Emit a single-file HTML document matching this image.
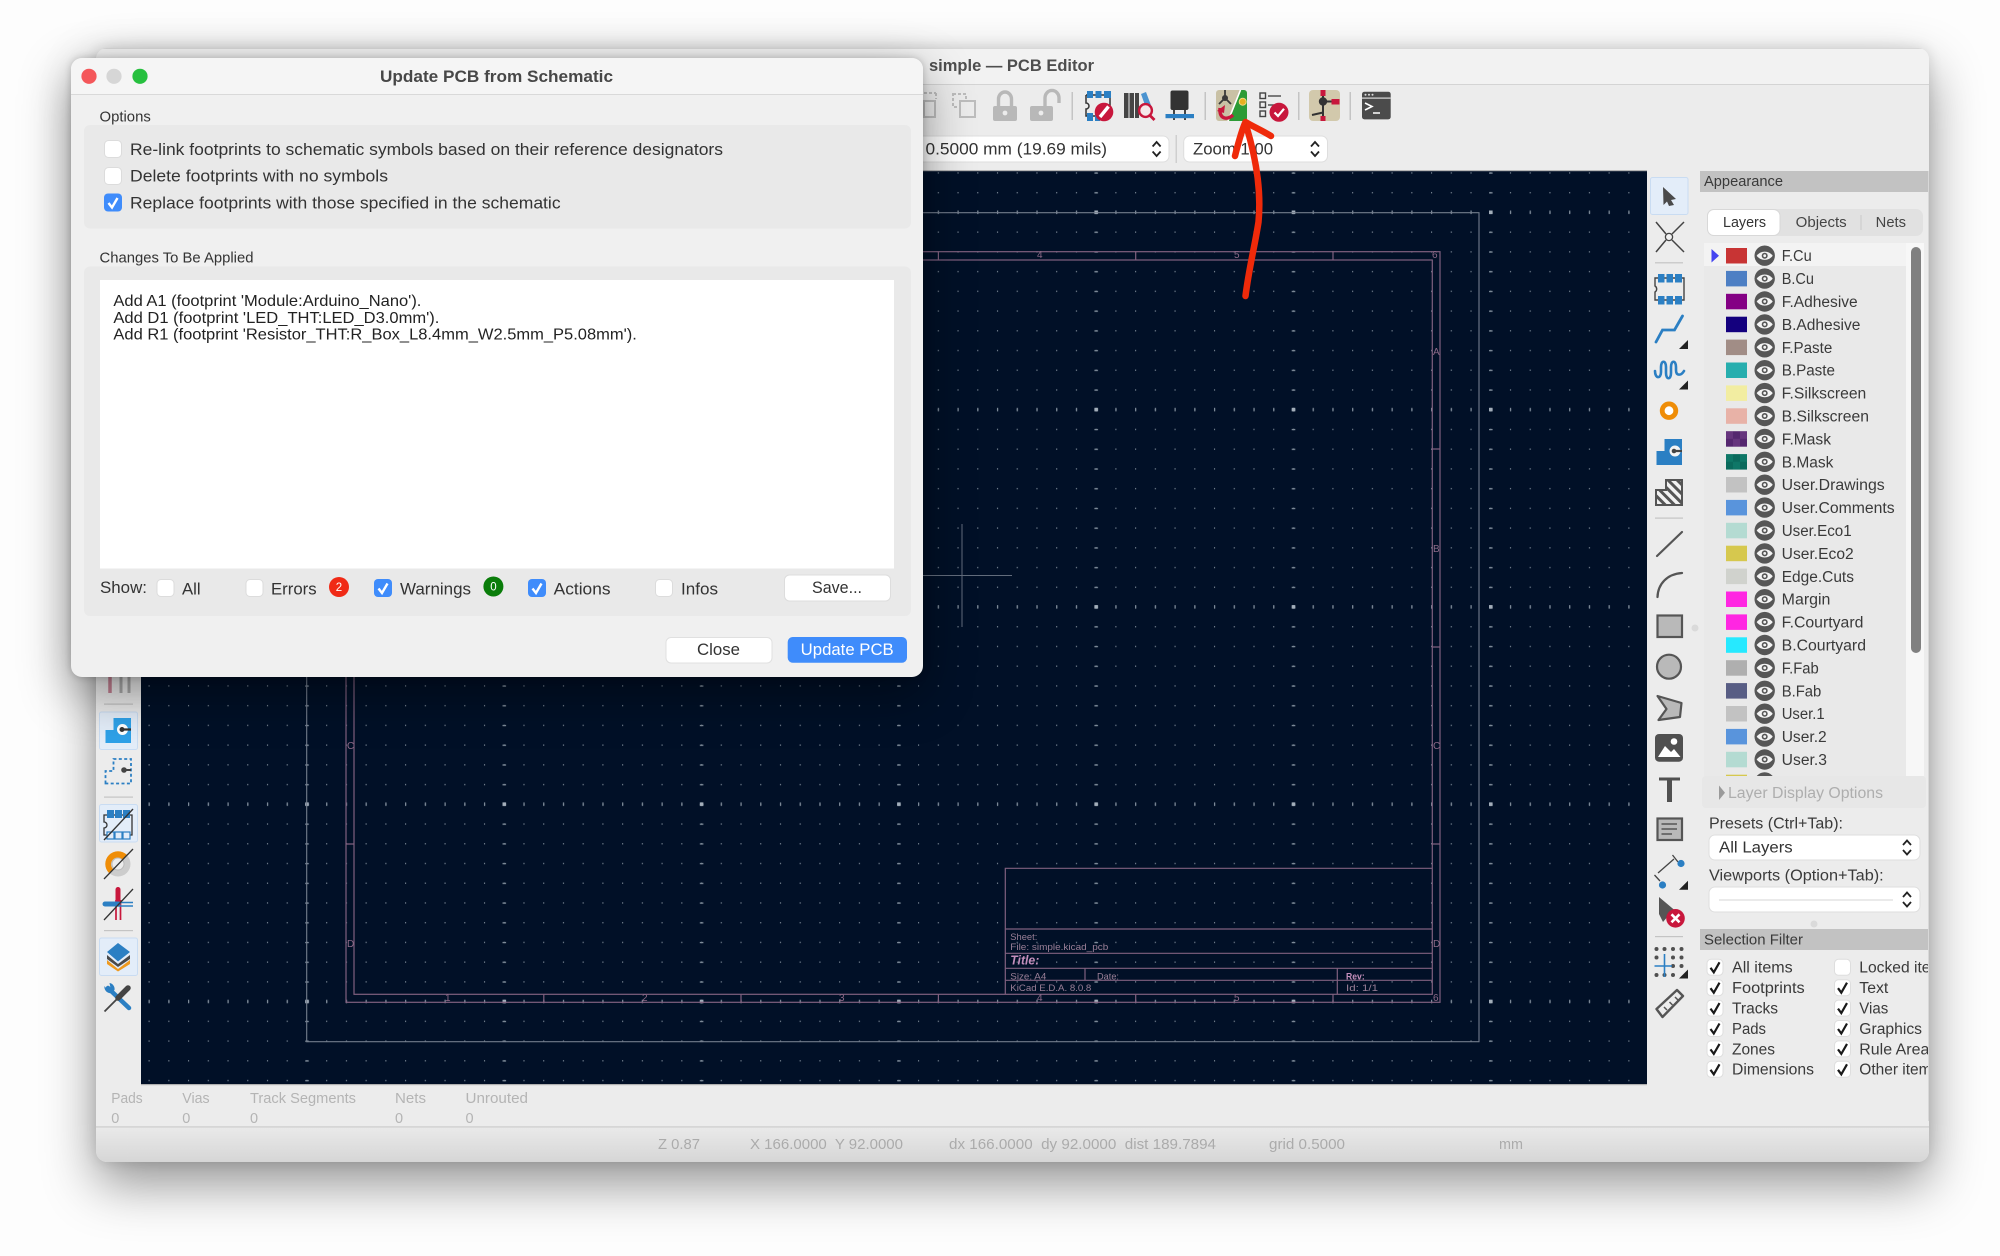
<!DOCTYPE html>
<html>
<head>
<meta charset="utf-8">
<title>simple — PCB Editor</title>
<style>
html,body{margin:0;padding:0;background:#fff;width:2000px;height:1256px;overflow:hidden}
body{position:relative;background:#fdfdfd}
.main{position:absolute;left:96px;top:48px;width:1833px;height:1114px;border-radius:11px;background:#ececec;box-shadow:0 22px 52px rgba(0,0,0,.42),0 0 14px rgba(0,0,0,.12)}
.dlg{position:absolute;left:71px;top:58px;width:852px;height:619px;border-radius:11px;background:#f0f0f0;box-shadow:0 16px 50px rgba(0,0,0,.42),0 0 8px rgba(0,0,0,.2)}
svg{position:absolute;left:0;top:0;filter:blur(.35px)}
text{font-family:"Liberation Sans",sans-serif;font-size:15.5px;fill:#3a3a3a}
</style>
</head>
<body>
<div class="main"></div>
<svg width="2000" height="1256" viewBox="0 0 2000 1256" xmlns="http://www.w3.org/2000/svg">
<defs>
<clipPath id="win"><rect x="96" y="48" width="1833" height="1114" rx="11"/></clipPath>
<clipPath id="canv"><rect x="141" y="171" width="1506" height="913"/></clipPath>
<clipPath id="list"><rect x="1704" y="243" width="220" height="533"/></clipPath>
<pattern id="g1" patternUnits="userSpaceOnUse" x="306.4" y="211.7" width="19.73" height="19.73"><rect width="1.1" height="1.4" fill="#74818f"/></pattern>
<pattern id="g2" patternUnits="userSpaceOnUse" x="305.2" y="211.5" width="197.3" height="19.73"><rect width="3.6" height="1.3" y=".4" fill="#7f8c9a"/></pattern>
<pattern id="g3" patternUnits="userSpaceOnUse" x="306.4" y="210.5" width="19.73" height="197.3"><rect width="1.2" height="3.6" fill="#7f8c9a"/></pattern>
<pattern id="g4" patternUnits="userSpaceOnUse" x="305.2" y="210.5" width="197.3" height="197.3"><rect width="3.6" height="3.6" fill="#a3aeba"/></pattern>
<pattern id="st" patternUnits="userSpaceOnUse" width="6.5" height="6.5" patternTransform="rotate(-45)"><rect width="6.5" height="6.5" fill="#f2f2f2"/><rect width="3" height="6.5" fill="#555"/></pattern>
<pattern id="ck1" patternUnits="userSpaceOnUse" x="1726" y="431.2" width="14" height="15.5"><rect width="14" height="15.5" fill="#55276f"/><rect width="7" height="7.7" fill="#66357d"/><rect x="7" y="7.7" width="7" height="7.7" fill="#66357d"/></pattern>
<pattern id="ck2" patternUnits="userSpaceOnUse" x="1726" y="454.1" width="14" height="15.5"><rect width="14" height="15.5" fill="#0a6a5c"/><rect width="7" height="7.7" fill="#0e7767"/><rect x="7" y="7.7" width="7" height="7.7" fill="#0e7767"/></pattern>
<g id="eye"><circle r="10.2" fill="#565656"/><path d="M-8 0C-4-5.500 4-5.500 8 0C4 5.500-4 5.500-8 0Z" fill="#f4f4f4"/><circle r="3" fill="#565656"/><circle r="1.400" fill="#f4f4f4"/></g>
<g id="ud"><path d="M-4-2.500L0-7L4-2.500M-4 2.500L0 7L4 2.500" fill="none" stroke="#222" stroke-width="1.800"/></g>
<g id="tri"><path d="M9 0V9H0Z" fill="#222"/></g>
<g id="sc"><rect x="-8" y="-8" width="16" height="16" rx="4" fill="#fff" stroke="#dedede"/><path d="M-4.500 .5L-1.200 5L4.500-5" fill="none" stroke="#1a1a1a" stroke-width="2.200"/></g>
</defs>
<g clip-path="url(#win)">
<rect x="96" y="48" width="1833" height="36" fill="#f2f2f2"/>
<rect x="96" y="84" width="1833" height="1" fill="#d4d4d4"/>
<rect x="96" y="85" width="1833" height="86" fill="#ececec"/>
<rect x="96" y="48" width="1833" height="1" fill="#d8d8d8"/>
<text x="929" y="71" textLength="165" lengthAdjust="spacingAndGlyphs" style="font-weight:700;font-size:16.500px;fill:#4e4e4e">simple — PCB Editor</text>

<!-- toolbar icons -->
<g fill="none" stroke="#bdbdbd" stroke-width="2">
<rect x="924" y="101" width="11" height="16"/><path d="M924 93h12M936 93v6" stroke-dasharray="3 2"/>
<rect x="953" y="94" width="13" height="13" stroke-dasharray="3 2"/><rect x="960" y="101" width="15" height="16" fill="#ececec"/>
</g>
<g fill="#b8b8b8">
<rect x="993" y="106" width="24" height="15" rx="2"/>
<path d="M998.500 106V99a6.500 7 0 0 1 13 0V106" fill="none" stroke="#b8b8b8" stroke-width="3.400"/>
<circle cx="1005" cy="113" r="2.400" fill="#ececec"/>
<rect x="1030" y="106" width="23" height="15" rx="2"/>
<path d="M1045 106V98a6.500 7 0 0 1 14 0V103" fill="none" stroke="#b8b8b8" stroke-width="3.400"/>
<circle cx="1041" cy="113" r="2.400" fill="#ececec"/>
</g>
<g fill="#c4c4c4"><rect x="1071.500" y="92" width="1.500" height="28"/><rect x="1204.500" y="92" width="1.500" height="28"/><rect x="1298" y="92" width="1.500" height="28"/><rect x="1349.500" y="92" width="1.500" height="28"/></g>
<!-- board edit -->
<path d="M1086 95H1110V106M1086 95V103a3 3 0 0 1 0 6V116H1098" fill="none" stroke="#333" stroke-width="1.500"/>
<g fill="#2b7fc3"><rect x="1087" y="91" width="6" height="7"/><rect x="1095.500" y="91" width="6" height="7"/><rect x="1104" y="91" width="7" height="7"/><rect x="1087" y="113" width="6" height="8"/><rect x="1095" y="113" width="5" height="8"/></g>
<circle cx="1104" cy="112" r="9.300" fill="#c8173c"/><path d="M1100 117L1108.500 106.500" stroke="#fff" stroke-width="3.400"/>
<!-- library -->
<g fill="#454545"><rect x="1124" y="93" width="4.500" height="25"/><rect x="1129.500" y="93" width="4.500" height="25"/><rect x="1135" y="93" width="4" height="25"/></g>
<path d="M1141 94L1146 92L1152 108L1146 108Z" fill="#4b93d0"/>
<circle cx="1145.500" cy="110.500" r="6.400" fill="#f4e9ea" stroke="#c8173c" stroke-width="2.400"/><path d="M1150 115.500L1154.500 120" stroke="#c8173c" stroke-width="2.800"/>
<!-- chip -->
<rect x="1170.500" y="90.500" width="18" height="19.500" rx="2" fill="#333"/><rect x="1173" y="110" width="2" height="10" fill="#444"/><rect x="1184" y="110" width="2" height="10" fill="#444"/><rect x="1165.500" y="114" width="28.500" height="4.200" fill="#2b7fc3"/>
<!-- update pcb icon -->
<rect x="1216" y="90" width="31" height="31" rx="3" fill="#c9c1a5"/>
<path d="M1241 90H1244a3 3 0 0 1 3 3V118a3 3 0 0 1-3 3H1229Z" fill="#2d9b36"/>
<path d="M1240.500 90L1228 121" stroke="#fff" stroke-width="1.600"/>
<circle cx="1242.700" cy="101.700" r="3.500" fill="#e7b020" stroke="#f2d880"/>
<path d="M1225 90V98M1219 104L1225 98L1231 104" fill="none" stroke="#3a3a3a" stroke-width="1.800"/><circle cx="1225" cy="98" r="3" fill="#3a3a3a"/>
<path d="M1220 108C1219 120 1228 120 1233 115" fill="none" stroke="#c8173c" stroke-width="3.400"/><path d="M1217 111L1225 105L1224 113Z" fill="#c8173c"/>
<!-- checklist -->
<g fill="none" stroke="#444" stroke-width="1.400"><rect x="1260" y="93" width="5.500" height="5.500"/><rect x="1260" y="102" width="5.500" height="5.500"/><rect x="1260" y="111" width="5.500" height="5.500"/></g>
<path d="M1268 96H1281M1268 105H1274" stroke="#555" stroke-width="1.500"/>
<circle cx="1279" cy="112.300" r="9.500" fill="#c8173c"/><path d="M1274.500 112.500L1278 116L1284 108.800" fill="none" stroke="#fff" stroke-width="2.200"/>
<!-- schematic -->
<rect x="1309" y="90" width="31" height="31" rx="4" fill="#d2c9ac"/>
<path d="M1323 92V120M1323 101.500H1335M1312 115L1323 112.500" fill="none" stroke="#333" stroke-width="2"/>
<circle cx="1323" cy="101.500" r="4.200" fill="#333"/><rect x="1320.500" y="90" width="5" height="6" fill="#c8173c"/><rect x="1331.500" y="99" width="8" height="5.500" fill="#c8173c"/><rect x="1320.500" y="116" width="5" height="5" fill="#c8173c"/>
<!-- terminal -->
<rect x="1362" y="91.700" width="28.700" height="27.700" rx="2.500" fill="#4b4b4b"/><rect x="1362" y="97.500" width="28.700" height="1.200" fill="#ddd"/>
<g fill="#ddd"><circle cx="1365.500" cy="94.700" r="1"/><circle cx="1369" cy="94.700" r="1"/><circle cx="1372.500" cy="94.700" r="1"/></g>
<path d="M1365 103L1372 106.500L1365 110M1373 113H1380" fill="none" stroke="#fff" stroke-width="1.600"/>

<!-- dropdown row -->
<rect x="900" y="136" width="269" height="26" rx="6" fill="#fff" stroke="#dedede"/>
<text x="925.500" y="154.300" textLength="181.500" lengthAdjust="spacingAndGlyphs" style="font-size:16.500px;fill:#333">0.5000 mm (19.69 mils)</text>
<use href="#ud" x="1156.600" y="149"/>
<rect x="1175.500" y="135" width="1.500" height="28" fill="#cfcfcf"/>
<rect x="1183.700" y="136" width="143.800" height="26" rx="6" fill="#fff" stroke="#dedede"/>
<text x="1193" y="154.300" textLength="80" lengthAdjust="spacingAndGlyphs" style="font-size:16.500px;fill:#333">Zoom 1.00</text>
<use href="#ud" x="1315" y="149"/>

<!-- canvas -->
<rect x="141" y="171" width="1506" height="913" fill="#011027"/>
<rect x="141" y="170" width="1506" height="1.200" fill="#b5b5b5"/><rect x="141" y="1084" width="1506" height="1.200" fill="#b0b0b0"/>
<g clip-path="url(#canv)">
<rect x="141" y="171" width="1506" height="913" fill="url(#g1)"/>
<rect x="141" y="171" width="1506" height="913" fill="url(#g2)"/>
<rect x="141" y="171" width="1506" height="913" fill="url(#g3)"/>
<rect x="141" y="171" width="1506" height="913" fill="url(#g4)"/>
<rect x="306.700" y="212.700" width="1172.300" height="829" fill="none" stroke="#747e8e" stroke-width="1.100"/>
<g fill="none" stroke="#80607f" stroke-width="1.200">
<rect x="346" y="251.700" width="1094" height="750.600"/>
<rect x="354" y="260" width="1078.300" height="734.300"/>
<path d="M1005.300 994.300V868.300H1432.300M1005.300 929H1432.300M1005.300 953.300H1432.300M1005.300 968.300H1432.300M1005.300 980.300H1432.300M1085 968.300V980.300M1337.300 968.300V994.300"/>
<path d="M543.800 994.300V1002.300M741 994.300V1002.300M938.400 994.300V1002.300M1135.700 994.300V1002.300M1333 994.300V1002.300M938.400 251.700V260M1135.700 251.700V260M1333 251.700V260M346 844H354M1432.300 449H1440M1432.300 647H1440M1432.300 844H1440"/>
</g>
<path d="M923 575.500H1012M962 524V627" stroke="#8b93a0" stroke-width="1" opacity=".7"/>
<g>
<text x="1037" y="258" style="font-size:10px;fill:#8d6a88">4</text><text x="1234" y="258" style="font-size:10px;fill:#8d6a88">5</text><text x="1432" y="258" style="font-size:10px;fill:#8d6a88">6</text>
<text x="445" y="1001" style="font-size:10px;fill:#8d6a88">1</text><text x="642" y="1001" style="font-size:10px;fill:#8d6a88">2</text><text x="839" y="1001" style="font-size:10px;fill:#8d6a88">3</text><text x="1037" y="1001" style="font-size:10px;fill:#8d6a88">4</text><text x="1234" y="1001" style="font-size:10px;fill:#8d6a88">5</text><text x="1433" y="1001" style="font-size:10px;fill:#8d6a88">6</text>
<text x="347" y="749" style="font-size:10px;fill:#8d6a88">C</text><text x="347" y="947" style="font-size:10px;fill:#8d6a88">D</text>
<text x="1433" y="355" style="font-size:10px;fill:#8d6a88">A</text><text x="1433" y="552" style="font-size:10px;fill:#8d6a88">B</text><text x="1433" y="749" style="font-size:10px;fill:#8d6a88">C</text><text x="1433" y="947" style="font-size:10px;fill:#8d6a88">D</text>
</g>
<text x="1010.300" y="940" textLength="27" lengthAdjust="spacingAndGlyphs" style="font-size:9.500px;fill:#9a7f97">Sheet:</text>
<text x="1010.300" y="950" textLength="98" lengthAdjust="spacingAndGlyphs" style="font-size:9.500px;fill:#9a7f97">File: simple.kicad_pcb</text>
<text x="1010.300" y="964.500" textLength="29" lengthAdjust="spacingAndGlyphs" style="font-size:12.500px;font-weight:700;font-style:italic;fill:#c48fbc">Title:</text>
<text x="1010.300" y="979.500" textLength="36" lengthAdjust="spacingAndGlyphs" style="font-size:9.500px;fill:#9a7f97">Size: A4</text>
<text x="1097" y="979.500" textLength="22" lengthAdjust="spacingAndGlyphs" style="font-size:9.500px;fill:#9a7f97">Date:</text>
<text x="1346" y="979.500" textLength="18.700" lengthAdjust="spacingAndGlyphs" style="font-size:9.500px;font-weight:700;fill:#c48fbc">Rev:</text>
<text x="1010.300" y="991" textLength="81" lengthAdjust="spacingAndGlyphs" style="font-size:9.500px;fill:#9a7f97">KiCad E.D.A. 8.0.8</text>
<text x="1346" y="991" textLength="32" lengthAdjust="spacingAndGlyphs" style="font-size:9.500px;fill:#9a7f97">Id: 1/1</text>
</g>

<!-- left toolbar -->
<path d="M110 677V693" stroke="#c48092" stroke-width="3.500"/><path d="M121 677V693M129 677V693" stroke="#ababab" stroke-width="3"/>
<rect x="104" y="703.500" width="29" height="1.200" fill="#c4c4c4"/><rect x="104" y="796.500" width="29" height="1.200" fill="#c4c4c4"/><rect x="104" y="930" width="29" height="1.200" fill="#c4c4c4"/>
<g fill="#e3edf9" stroke="#c9dcf2"><rect x="99.500" y="712" width="38" height="37.500" rx="2"/><rect x="99.500" y="804.500" width="38" height="37.500" rx="2"/><rect x="99.500" y="938" width="38" height="37.500" rx="2"/></g>
<path d="M105.500 743V730H113.500V718H131V743Z" fill="#2ea1e8"/><circle cx="122.500" cy="729.500" r="5.500" fill="#fff"/><path d="M121 729.500H131" stroke="#333" stroke-width="2.200"/><circle cx="122" cy="729.500" r="2.500" fill="#333"/>
<path d="M105.500 783.500V771H113.500V759H131V783.500Z" fill="none" stroke="#2b7fc3" stroke-width="1.800" stroke-dasharray="3 2.400"/><path d="M122 770H131" stroke="#444" stroke-width="2"/><circle cx="124" cy="770" r="2.800" fill="#444"/>
<path d="M104 815H132V835H104V828a3 3 0 0 0 0-6Z" fill="none" stroke="#333" stroke-width="1.300"/>
<g fill="#2b7fc3"><rect x="107" y="810" width="7" height="8"/><rect x="115" y="810" width="7" height="8"/><rect x="123" y="810" width="7" height="8"/></g>
<g fill="#e3edf9" stroke="#2b7fc3" stroke-width="1.200"><rect x="107" y="832" width="7" height="7"/><rect x="115" y="832" width="7" height="7"/><rect x="123" y="832" width="7" height="7"/></g>
<path d="M104 840L133 809" stroke="#333" stroke-width="1.400"/>
<circle cx="118" cy="864" r="12.500" fill="#ccc"/><circle cx="118" cy="864" r="6" fill="#ececec" stroke="#bbb"/>
<path d="M127 855A12.500 12.500 0 1 0 109 873L113 869A6.500 6.500 0 0 1 122.500 859.500Z" fill="#ef8d07"/>
<path d="M104 879L133 849" stroke="#333" stroke-width="1.300"/>
<path d="M118 889.500V900" stroke="#c8173c" stroke-width="5" stroke-linecap="round"/><path d="M116 900V920M120.500 900V920" stroke="#c8173c" stroke-width="1.700"/>
<path d="M105 904H118" stroke="#2b7fc3" stroke-width="5" stroke-linecap="round"/><path d="M118 902.500H133M118 906H133" stroke="#2b7fc3" stroke-width="1.500"/>
<path d="M104 920L133 889" stroke="#333" stroke-width="1.300"/>
<path d="M107 960L118 969L130 960V964L118 971.500L107 964Z" fill="#ef9a1f"/><path d="M107 955L118 964L130 955V959L118 967L107 959Z" fill="#4a4a4a"/><path d="M118 943L130 952L118 961.500L107 952Z" fill="#2b7fc3"/>
<path d="M108 988L129 1008" stroke="#2b7fc3" stroke-width="4.500" stroke-linecap="round"/><path d="M104.500 986a6 6 0 0 0 7 7l3-3a6 6 0 0 0-5-7l1 5-3 2Z" fill="#2b7fc3"/>
<path d="M104.500 1011.500L118 998" stroke="#444" stroke-width="1.800"/><path d="M118 998L128 988" stroke="#444" stroke-width="5.500" stroke-linecap="round"/>

<!-- right toolbar -->
<rect x="1650.500" y="177.500" width="37.500" height="37" rx="2" fill="#e3edf9" stroke="#c9dcf2"/>
<path d="M1663 187L1676 199L1671 200L1674 205L1669 206L1667 201.500L1663.500 205Z" fill="#4a4a4a"/>
<path d="M1656 222L1666 234M1672 234L1684 222M1656 252L1666 240M1672 240L1684 252" stroke="#444" stroke-width="1.500"/><circle cx="1669" cy="237" r="3.600" fill="#f2f2f2" stroke="#444" stroke-width="1.300"/>
<g fill="#c4c4c4"><rect x="1655" y="262.200" width="28" height="1.200"/><rect x="1655" y="517.500" width="28" height="1.200"/><rect x="1655" y="936" width="28" height="1.200"/></g>
<path d="M1655 278H1684V300H1655V292a3.500 3.500 0 0 0 0-6Z" fill="none" stroke="#444" stroke-width="1.400"/>
<g fill="#2b7fc3"><rect x="1658" y="274" width="6.500" height="8.500"/><rect x="1666.500" y="274" width="6.500" height="8.500"/><rect x="1675" y="274" width="7" height="8.500"/><rect x="1658" y="296" width="6.500" height="8.500"/><rect x="1666.500" y="296" width="6.500" height="8.500"/><rect x="1675" y="296" width="7" height="8.500"/></g>
<path d="M1656 342L1662.500 330H1674.500L1682.500 316" fill="none" stroke="#2b7fc3" stroke-width="2.800" stroke-linecap="round"/>
<use href="#tri" x="1679" y="340"/>
<path d="M1655 371C1655 379 1661 379 1661 372V367C1661 360 1666 360 1666 367V373C1666 380 1671 380 1671 373V367C1671 360 1676 360 1676 367V370C1676 376 1681 376 1684 371" fill="none" stroke="#2b7fc3" stroke-width="2.600" stroke-linecap="round"/>
<use href="#tri" x="1679" y="380.500"/>
<circle cx="1669" cy="410.700" r="6.800" fill="#fff" stroke="#ef8d07" stroke-width="4.800"/>
<path d="M1656.500 465V451H1664.500V439H1682V465Z" fill="#2b7fc3"/><circle cx="1675" cy="451" r="5.500" fill="#f4f4f4"/><path d="M1673 451H1682" stroke="#444" stroke-width="2.200"/><circle cx="1674" cy="451" r="2.300" fill="#444"/>
<path d="M1656 505V490H1666V480H1682V505Z" fill="url(#st)" stroke="#555" stroke-width="2"/>
<path d="M1657 556L1682 532" stroke="#555" stroke-width="2.200" stroke-linecap="round"/>
<path d="M1657.500 597C1658 584 1667 574 1682 573" fill="none" stroke="#555" stroke-width="2.300" stroke-linecap="round"/>
<rect x="1657.500" y="615.500" width="24.500" height="21.500" fill="#b9b9b9" stroke="#555" stroke-width="2.200"/>
<circle cx="1669" cy="666.700" r="12" fill="#b9b9b9" stroke="#555" stroke-width="2.200"/>
<path d="M1657.500 696L1681.500 703L1680 717L1658.500 720L1666.500 709Z" fill="#b9b9b9" stroke="#555" stroke-width="2.200" stroke-linejoin="round"/>
<rect x="1655" y="734" width="28" height="27.700" rx="4" fill="#505050"/><path d="M1658 757L1665 746L1671 752L1674 749L1680.500 757Z" fill="#fff"/><circle cx="1674" cy="741.500" r="3.300" fill="#fff"/>
<path d="M1659 777.500H1680V780.500H1672V802H1667V780.500H1659Z" fill="#505050"/>
<rect x="1657.500" y="818.500" width="24.500" height="21.500" fill="#b9b9b9" stroke="#555" stroke-width="2.200"/><path d="M1661.500 824H1677M1661.500 829H1677M1661.500 834H1672" stroke="#555" stroke-width="1.500"/>
<path d="M1654.500 875L1660 881M1672.500 855L1678 862M1658 873L1674 859" fill="none" stroke="#444" stroke-width="1.300"/>
<circle cx="1681" cy="863.500" r="3.600" fill="#2b7fc3"/><circle cx="1662.500" cy="885" r="3.600" fill="#2b7fc3"/>
<use href="#tri" x="1679" y="880.700"/>
<path d="M1659 897L1678 913L1669 915L1663 922L1659 914Z" fill="#555"/>
<circle cx="1675.500" cy="918.300" r="9.300" fill="#c8173c"/><path d="M1671.500 914.300L1679.500 922.300M1679.500 914.300L1671.500 922.300" stroke="#fff" stroke-width="2.600"/>
<g fill="#505050"><circle cx="1656.500" cy="949" r="2"/><circle cx="1664.500" cy="949" r="2"/><circle cx="1673" cy="949" r="2"/><circle cx="1681.500" cy="949" r="2"/><circle cx="1656.500" cy="957.500" r="2"/><circle cx="1673" cy="957.500" r="2"/><circle cx="1681.500" cy="957.500" r="2"/><circle cx="1673" cy="966" r="2"/><circle cx="1681.500" cy="966" r="2"/><circle cx="1656.500" cy="975" r="2"/><circle cx="1664.500" cy="975" r="2"/><circle cx="1673" cy="975" r="2"/></g>
<path d="M1654.500 966H1672M1664.500 954V977" stroke="#2b7fc3" stroke-width="1.600"/><use href="#tri" x="1679" y="969.500"/>
<path d="M1656.500 1009L1677 990L1683 996L1662.500 1017Z" fill="#ececec" stroke="#555" stroke-width="2.400" stroke-linejoin="round"/><path d="M1664 1007L1667 1010M1669.500 1002L1672.500 1005M1675 997L1678 1000" stroke="#555" stroke-width="1.500"/>
<circle cx="1695" cy="628" r="3.500" fill="#dadada"/>

<!-- appearance -->
<rect x="1700" y="171" width="229" height="21" fill="#c2c2c2"/>
<text x="1704" y="186" textLength="79" lengthAdjust="spacingAndGlyphs" style="font-size:14.500px;fill:#3a3a3a">Appearance</text>
<rect x="1707" y="209" width="216" height="27" rx="7" fill="#e1e1e1"/>
<rect x="1707.500" y="209.500" width="72.500" height="26" rx="6.500" fill="#fff" stroke="#d8d8d8"/>
<rect x="1860.500" y="215" width="1" height="15" fill="#c9c9c9"/>
<text x="1723" y="227" textLength="43" lengthAdjust="spacingAndGlyphs" style="font-size:14.500px;fill:#333">Layers</text>
<text x="1795.700" y="227" textLength="51" lengthAdjust="spacingAndGlyphs" style="font-size:14.500px;fill:#444">Objects</text>
<text x="1875.700" y="227" textLength="30.300" lengthAdjust="spacingAndGlyphs" style="font-size:14.500px;fill:#444">Nets</text>
<rect x="1704" y="243" width="220" height="533" fill="#e9e9e9"/>
<rect x="1906" y="243" width="18" height="533" fill="#f7f7f7"/>
<rect x="1704" y="243" width="202" height="23" fill="#f3f3f3"/>
<rect x="1911" y="247" width="10" height="406" rx="5" fill="#808080"/>
<path d="M1711.500 249V262.500L1719 255.700Z" fill="#4444f0"/>
<g clip-path="url(#list)">
<g>
<rect x="1726" y="248" width="21" height="15.500" fill="#c83434"/>
<rect x="1726" y="270.900" width="21" height="15.500" fill="#4d7fc4"/>
<rect x="1726" y="293.800" width="21" height="15.500" fill="#840084"/>
<rect x="1726" y="316.700" width="21" height="15.500" fill="#14007e"/>
<rect x="1726" y="339.600" width="21" height="15.500" fill="#a18d86"/>
<rect x="1726" y="362.500" width="21" height="15.500" fill="#27aeae"/>
<rect x="1726" y="385.400" width="21" height="15.500" fill="#f2eda1"/>
<rect x="1726" y="408.300" width="21" height="15.500" fill="#e8b2a7"/>
<rect x="1726" y="431.200" width="21" height="15.500" fill="url(#ck1)"/>
<rect x="1726" y="454.100" width="21" height="15.500" fill="url(#ck2)"/>
<rect x="1726" y="477" width="21" height="15.500" fill="#c2c2c2"/>
<rect x="1726" y="499.900" width="21" height="15.500" fill="#5994dc"/>
<rect x="1726" y="522.800" width="21" height="15.500" fill="#b4dbd2"/>
<rect x="1726" y="545.700" width="21" height="15.500" fill="#d6c84e"/>
<rect x="1726" y="568.600" width="21" height="15.500" fill="#d0d2cd"/>
<rect x="1726" y="591.500" width="21" height="15.500" fill="#ff26e2"/>
<rect x="1726" y="614.400" width="21" height="15.500" fill="#ff26e2"/>
<rect x="1726" y="637.300" width="21" height="15.500" fill="#26e9ff"/>
<rect x="1726" y="660.200" width="21" height="15.500" fill="#afafaf"/>
<rect x="1726" y="683.100" width="21" height="15.500" fill="#585d84"/>
<rect x="1726" y="706" width="21" height="15.500" fill="#c2c2c2"/>
<rect x="1726" y="728.900" width="21" height="15.500" fill="#5994dc"/>
<rect x="1726" y="751.800" width="21" height="15.500" fill="#b4dbd2"/>
<rect x="1726" y="774.700" width="21" height="15.500" fill="#d6c84e"/>
</g>
<use href="#eye" x="1764.700" y="255.700"/><use href="#eye" x="1764.700" y="278.600"/><use href="#eye" x="1764.700" y="301.500"/><use href="#eye" x="1764.700" y="324.400"/><use href="#eye" x="1764.700" y="347.300"/><use href="#eye" x="1764.700" y="370.200"/><use href="#eye" x="1764.700" y="393.100"/><use href="#eye" x="1764.700" y="416"/><use href="#eye" x="1764.700" y="438.900"/><use href="#eye" x="1764.700" y="461.800"/><use href="#eye" x="1764.700" y="484.700"/><use href="#eye" x="1764.700" y="507.600"/><use href="#eye" x="1764.700" y="530.500"/><use href="#eye" x="1764.700" y="553.400"/><use href="#eye" x="1764.700" y="576.300"/><use href="#eye" x="1764.700" y="599.200"/><use href="#eye" x="1764.700" y="622.100"/><use href="#eye" x="1764.700" y="645"/><use href="#eye" x="1764.700" y="667.900"/><use href="#eye" x="1764.700" y="690.800"/><use href="#eye" x="1764.700" y="713.700"/><use href="#eye" x="1764.700" y="736.600"/><use href="#eye" x="1764.700" y="759.500"/><use href="#eye" x="1764.700" y="782.400"/>
<text x="1781.700" y="261.200" textLength="30" lengthAdjust="spacingAndGlyphs">F.Cu</text>
<text x="1781.700" y="284.100" textLength="32.300" lengthAdjust="spacingAndGlyphs">B.Cu</text>
<text x="1781.700" y="307" textLength="76" lengthAdjust="spacingAndGlyphs">F.Adhesive</text>
<text x="1781.700" y="329.900" textLength="78.700" lengthAdjust="spacingAndGlyphs">B.Adhesive</text>
<text x="1781.700" y="352.800" textLength="50.600" lengthAdjust="spacingAndGlyphs">F.Paste</text>
<text x="1781.700" y="375.700" textLength="53.300" lengthAdjust="spacingAndGlyphs">B.Paste</text>
<text x="1781.700" y="398.600" textLength="84.600" lengthAdjust="spacingAndGlyphs">F.Silkscreen</text>
<text x="1781.700" y="421.500" textLength="87.300" lengthAdjust="spacingAndGlyphs">B.Silkscreen</text>
<text x="1781.700" y="444.400" textLength="49.300" lengthAdjust="spacingAndGlyphs">F.Mask</text>
<text x="1781.700" y="467.300" textLength="51.700" lengthAdjust="spacingAndGlyphs">B.Mask</text>
<text x="1781.700" y="490.200" textLength="103" lengthAdjust="spacingAndGlyphs">User.Drawings</text>
<text x="1781.700" y="513.100" textLength="113" lengthAdjust="spacingAndGlyphs">User.Comments</text>
<text x="1781.700" y="536" textLength="70" lengthAdjust="spacingAndGlyphs">User.Eco1</text>
<text x="1781.700" y="558.900" textLength="72" lengthAdjust="spacingAndGlyphs">User.Eco2</text>
<text x="1781.700" y="581.800" textLength="72.300" lengthAdjust="spacingAndGlyphs">Edge.Cuts</text>
<text x="1781.700" y="604.700" textLength="48.700" lengthAdjust="spacingAndGlyphs">Margin</text>
<text x="1781.700" y="627.600" textLength="81.700" lengthAdjust="spacingAndGlyphs">F.Courtyard</text>
<text x="1781.700" y="650.500" textLength="84.300" lengthAdjust="spacingAndGlyphs">B.Courtyard</text>
<text x="1781.700" y="673.400" textLength="37" lengthAdjust="spacingAndGlyphs">F.Fab</text>
<text x="1781.700" y="696.300" textLength="39.600" lengthAdjust="spacingAndGlyphs">B.Fab</text>
<text x="1781.700" y="719.200" textLength="43" lengthAdjust="spacingAndGlyphs">User.1</text>
<text x="1781.700" y="742.100" textLength="45" lengthAdjust="spacingAndGlyphs">User.2</text>
<text x="1781.700" y="765" textLength="45.300" lengthAdjust="spacingAndGlyphs">User.3</text>
</g>
<rect x="1702" y="776" width="224" height="32" rx="4" fill="#e7e7e7"/>
<path d="M1719 785.500V800L1725 792.700Z" fill="#9a9a9a"/>
<text x="1728" y="798" textLength="155" lengthAdjust="spacingAndGlyphs" style="fill:#aeaeae">Layer Display Options</text>
<text x="1709" y="828.300" textLength="134" lengthAdjust="spacingAndGlyphs">Presets (Ctrl+Tab):</text>
<rect x="1709" y="835" width="211" height="25" rx="6" fill="#fff" stroke="#dedede"/>
<text x="1719" y="852.300" textLength="73.700" lengthAdjust="spacingAndGlyphs" style="fill:#333">All Layers</text>
<use href="#ud" x="1907" y="847.500"/>
<text x="1709" y="880.700" textLength="174.700" lengthAdjust="spacingAndGlyphs">Viewports (Option+Tab):</text>
<rect x="1709" y="887" width="211" height="25" rx="6" fill="#fff" stroke="#dedede"/>
<rect x="1719" y="899.500" width="174" height="1" fill="#d5d5d5"/>
<use href="#ud" x="1907" y="899.500"/>
<circle cx="1814" cy="924" r="3.500" fill="#dadada"/>
<rect x="1700" y="929" width="229" height="21" fill="#c2c2c2"/>
<text x="1704" y="944.500" textLength="99" lengthAdjust="spacingAndGlyphs" style="font-size:14.500px">Selection Filter</text>
<use href="#sc" x="1715" y="967.300"/><use href="#sc" x="1715" y="987.700"/><use href="#sc" x="1715" y="1008.100"/><use href="#sc" x="1715" y="1028.500"/><use href="#sc" x="1715" y="1048.900"/><use href="#sc" x="1715" y="1069.300"/>
<rect x="1834.500" y="959.300" width="16" height="16" rx="4" fill="#fff" stroke="#dedede"/>
<use href="#sc" x="1842.500" y="987.700"/><use href="#sc" x="1842.500" y="1008.100"/><use href="#sc" x="1842.500" y="1028.500"/><use href="#sc" x="1842.500" y="1048.900"/><use href="#sc" x="1842.500" y="1069.300"/>
<text x="1732" y="972.700" textLength="60.700" lengthAdjust="spacingAndGlyphs">All items</text>
<text x="1732" y="993.100" textLength="72.700" lengthAdjust="spacingAndGlyphs">Footprints</text>
<text x="1732" y="1013.500" textLength="46" lengthAdjust="spacingAndGlyphs">Tracks</text>
<text x="1732" y="1033.900" textLength="34" lengthAdjust="spacingAndGlyphs">Pads</text>
<text x="1732" y="1054.300" textLength="43" lengthAdjust="spacingAndGlyphs">Zones</text>
<text x="1732" y="1074.700" textLength="82" lengthAdjust="spacingAndGlyphs">Dimensions</text>
<text x="1859.300" y="972.700" textLength="92" lengthAdjust="spacingAndGlyphs">Locked items</text>
<text x="1859.300" y="993.100" textLength="29" lengthAdjust="spacingAndGlyphs">Text</text>
<text x="1859.300" y="1013.500" textLength="29" lengthAdjust="spacingAndGlyphs">Vias</text>
<text x="1859.300" y="1033.900" textLength="62.700" lengthAdjust="spacingAndGlyphs">Graphics</text>
<text x="1859.300" y="1054.300" textLength="78" lengthAdjust="spacingAndGlyphs">Rule Areas</text>
<text x="1859.300" y="1074.700" textLength="80" lengthAdjust="spacingAndGlyphs">Other items</text>
<rect x="1928" y="171" width="1" height="950" fill="#d8d8d8"/>

<!-- message panel -->
<g>
<text x="111.300" y="1103" textLength="31.400" lengthAdjust="spacingAndGlyphs" style="font-size:14.500px;fill:#b4b4b4">Pads</text><text x="111.300" y="1123" style="font-size:14.500px;fill:#b4b4b4">0</text>
<text x="182.300" y="1103" textLength="27.300" lengthAdjust="spacingAndGlyphs" style="font-size:14.500px;fill:#b4b4b4">Vias</text><text x="182.300" y="1123" style="font-size:14.500px;fill:#b4b4b4">0</text>
<text x="250" y="1103" textLength="106" lengthAdjust="spacingAndGlyphs" style="font-size:14.500px;fill:#b4b4b4">Track Segments</text><text x="250" y="1123" style="font-size:14.500px;fill:#b4b4b4">0</text>
<text x="395" y="1103" textLength="31" lengthAdjust="spacingAndGlyphs" style="font-size:14.500px;fill:#b4b4b4">Nets</text><text x="395" y="1123" style="font-size:14.500px;fill:#b4b4b4">0</text>
<text x="465.500" y="1103" textLength="62.500" lengthAdjust="spacingAndGlyphs" style="font-size:14.500px;fill:#b4b4b4">Unrouted</text><text x="465.500" y="1123" style="font-size:14.500px;fill:#b4b4b4">0</text>
</g>
<!-- status bar -->
<linearGradient id="sb" x1="0" y1="0" x2="0" y2="1"><stop offset="0" stop-color="#e9e9e9"/><stop offset="1" stop-color="#d6d6d6"/></linearGradient>
<rect x="96" y="1126" width="1833" height="1.800" fill="#d6d6d6"/>
<rect x="96" y="1128" width="1833" height="34" fill="url(#sb)"/>
<text x="658" y="1149" textLength="42" lengthAdjust="spacingAndGlyphs" style="font-size:14.500px;fill:#ababab">Z 0.87</text>
<text x="750" y="1149" textLength="153" lengthAdjust="spacingAndGlyphs" style="font-size:14.500px;fill:#ababab" xml:space="preserve">X 166.0000  Y 92.0000</text>
<text x="949" y="1149" textLength="267" lengthAdjust="spacingAndGlyphs" style="font-size:14.500px;fill:#ababab" xml:space="preserve">dx 166.0000  dy 92.0000  dist 189.7894</text>
<text x="1269" y="1149" textLength="76" lengthAdjust="spacingAndGlyphs" style="font-size:14.500px;fill:#ababab">grid 0.5000</text>
<text x="1499" y="1149" textLength="24" lengthAdjust="spacingAndGlyphs" style="font-size:14.500px;fill:#ababab">mm</text>
</g>
</svg>

<div class="dlg"></div>
<svg width="2000" height="1256" viewBox="0 0 2000 1256" xmlns="http://www.w3.org/2000/svg">
<defs>
<g id="cb2"><rect x=".5" y=".5" width="17" height="17" rx="4" fill="#fff" stroke="#dcdcdc"/></g>
<g id="cbc2"><rect width="18" height="18" rx="4" fill="#3f8cfb"/><path d="M4.500 9.500L8 14L13.500 4.500" fill="none" stroke="#fff" stroke-width="2.400"/></g>
</defs>
<path d="M71 94V69a11 11 0 0 1 11-11H912a11 11 0 0 1 11 11V94Z" fill="#f5f5f5"/>
<rect x="71" y="94" width="852" height="1" fill="#d9d9d9"/>
<circle cx="89" cy="76.300" r="7.600" fill="#f4575a"/><circle cx="114" cy="76.300" r="7.600" fill="#d6d6d6"/><circle cx="140" cy="76.300" r="7.600" fill="#27c03f"/>
<text x="380" y="82" textLength="233" lengthAdjust="spacingAndGlyphs" style="font-size:16.500px;font-weight:700;fill:#474747">Update PCB from Schematic</text>
<text x="99.500" y="121.300" textLength="51.300" lengthAdjust="spacingAndGlyphs" style="font-size:14.500px;fill:#333">Options</text>
<rect x="84" y="125" width="827" height="103.500" rx="6" fill="#e9e9e9"/>
<use href="#cb2" x="104" y="140"/><use href="#cb2" x="104" y="167"/><use href="#cbc2" x="104" y="193.500"/>
<text x="130" y="155" textLength="593" lengthAdjust="spacingAndGlyphs" style="font-size:16.500px;fill:#333">Re-link footprints to schematic symbols based on their reference designators</text>
<text x="130" y="181.700" textLength="258" lengthAdjust="spacingAndGlyphs" style="font-size:16.500px;fill:#333">Delete footprints with no symbols</text>
<text x="130" y="208.300" textLength="430.600" lengthAdjust="spacingAndGlyphs" style="font-size:16.500px;fill:#333">Replace footprints with those specified in the schematic</text>
<text x="99.500" y="262.300" textLength="154" lengthAdjust="spacingAndGlyphs" style="font-size:14.500px;fill:#333">Changes To Be Applied</text>
<rect x="84" y="266.500" width="827" height="349.500" rx="6" fill="#e9e9e9"/>
<rect x="100" y="280" width="794" height="288.500" fill="#fff"/>
<text x="113.400" y="306" textLength="308" lengthAdjust="spacingAndGlyphs" style="font-size:16px;fill:#222">Add A1 (footprint 'Module:Arduino_Nano').</text>
<text x="113.400" y="323" textLength="326" lengthAdjust="spacingAndGlyphs" style="font-size:16px;fill:#222">Add D1 (footprint 'LED_THT:LED_D3.0mm').</text>
<text x="113.400" y="339.600" textLength="523.500" lengthAdjust="spacingAndGlyphs" style="font-size:16px;fill:#222">Add R1 (footprint 'Resistor_THT:R_Box_L8.4mm_W2.5mm_P5.08mm').</text>
<text x="100" y="593" textLength="47" lengthAdjust="spacingAndGlyphs" style="font-size:16.500px;fill:#333">Show:</text>
<use href="#cb2" x="156.500" y="579"/>
<text x="182" y="594.300" textLength="18.600" lengthAdjust="spacingAndGlyphs" style="font-size:16.500px;fill:#333">All</text>
<use href="#cb2" x="245.500" y="579"/>
<text x="271" y="594.300" textLength="45.600" lengthAdjust="spacingAndGlyphs" style="font-size:16.500px;fill:#333">Errors</text>
<circle cx="339" cy="587" r="10" fill="#f02a16"/><text x="339" y="591" text-anchor="middle" style="font-size:11.500px;fill:#fff">2</text>
<use href="#cbc2" x="374" y="579"/>
<text x="400" y="594.300" textLength="71" lengthAdjust="spacingAndGlyphs" style="font-size:16.500px;fill:#333">Warnings</text>
<circle cx="493.400" cy="586.500" r="10" fill="#0a7d0a"/><text x="493.400" y="590.500" text-anchor="middle" style="font-size:11.500px;fill:#fff">0</text>
<use href="#cbc2" x="528" y="579"/>
<text x="553.700" y="594.300" textLength="56.800" lengthAdjust="spacingAndGlyphs" style="font-size:16.500px;fill:#333">Actions</text>
<use href="#cb2" x="655" y="579"/>
<text x="681" y="594.300" textLength="37" lengthAdjust="spacingAndGlyphs" style="font-size:16.500px;fill:#333">Infos</text>
<rect x="784.500" y="575" width="106" height="26" rx="5" fill="#fff" stroke="#dddddd"/>
<text x="812" y="593" textLength="50" lengthAdjust="spacingAndGlyphs" style="font-size:16.500px;fill:#333">Save...</text>
<rect x="666" y="637.500" width="106" height="25.500" rx="5" fill="#fff" stroke="#e0e0e0"/>
<text x="697" y="655" textLength="43" lengthAdjust="spacingAndGlyphs" style="font-size:16.500px;fill:#333">Close</text>
<rect x="787.700" y="637" width="119.300" height="25.700" rx="5" fill="#3f8cfb"/>
<text x="800.700" y="655" textLength="93" lengthAdjust="spacingAndGlyphs" style="font-size:16.500px;fill:#fff">Update PCB</text>

<!-- red arrow -->
<path d="M1245.500 296C1249 268 1255 245 1258.500 222C1261 195 1258 165 1246 125" fill="none" stroke="#ef2a0a" stroke-width="6.500" stroke-linecap="round"/>
<path d="M1235 156C1238 144 1241 132 1245.500 122C1254 127 1263 131 1271 136" fill="none" stroke="#ef2a0a" stroke-width="6.500" stroke-linecap="round" stroke-linejoin="round"/>
</svg>
</body>
</html>
